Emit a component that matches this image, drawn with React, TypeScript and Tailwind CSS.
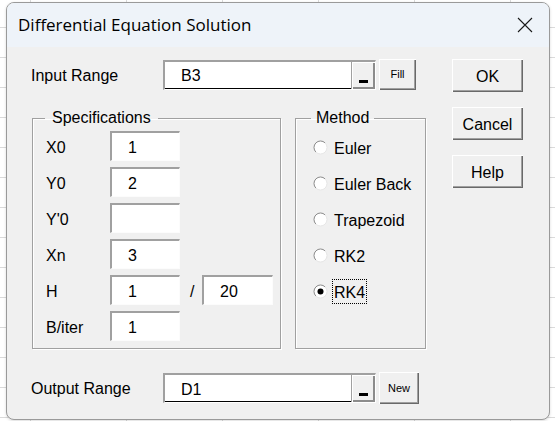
import React from 'react';

const sans = "font-['Liberation_Sans',Arial,sans-serif]";

function Box({ value, className }: { value: string; className: string }) {
  return (
    <div
      className={`flex h-[30px] items-center bg-white pl-[16px] pt-[3px] border-t-2 border-l-2 border-[#a0a0a0] border-b border-r border-b-[#fcfcfc] border-r-[#fcfcfc] ${className}`}
    >
      {value}
    </div>
  );
}

function RefEdit({ value }: { value: string }) {
  return (
    <div className="flex h-[30px] w-[213px] border-t-2 border-l-2 border-[#a0a0a0] border-b border-r border-b-white border-r-white">
      <div className="flex flex-1 items-center border-b border-black bg-white pl-[16px] pt-[3px]">{value}</div>
      <div className="flex w-[24px] items-end justify-center border-l border-[#a0a0a0] bg-[#f0f0f0] pb-[6px] shadow-[inset_1px_1px_0_#fff,inset_-2px_-2px_0_#8c8c8c]">
        <div className="h-[3px] w-[9px] bg-black" />
      </div>
    </div>
  );
}

function Btn({ label, className, small }: { label: string; className: string; small?: boolean }) {
  return (
    <button
      className={`flex items-center justify-center bg-[#f0f0f0] text-black shadow-[inset_1px_1px_0_#fff,inset_-1px_-1px_0_#696969,inset_-2px_-2px_0_#a0a0a0] ${small ? 'text-[11px]' : 'text-[16px] pt-[2px]'} ${className}`}
    >
      {label}
    </button>
  );
}

function Radio({ label, checked }: { label: string; checked?: boolean }) {
  return (
    <div className="flex h-[30px] items-center pt-[3px]">
      <svg width="15" height="15" viewBox="0 0 15 15" className="shrink-0">
        <circle cx="7.5" cy="7.5" r="6.5" fill="white" />
        <path d="M2.9 12.1 A6.5 6.5 0 0 1 12.1 2.9" stroke="#8a8a8a" strokeWidth="1" fill="none" />
        <path d="M12.1 2.9 A6.5 6.5 0 0 1 2.9 12.1" stroke="#e6e6e6" strokeWidth="1" fill="none" />
        {checked && <circle cx="7.5" cy="7.5" r="3" fill="black" />}
      </svg>
      <span
        className={`ml-[4px] flex h-[25px] items-center border px-[1px] pt-[2px] ${checked ? 'border-dotted border-black' : 'border-transparent'}`}
      >
        {label}
      </span>
    </div>
  );
}

const specRows: [string, string][] = [
  ['X0', '1'],
  ['Y0', '2'],
  ["Y'0", ''],
  ['Xn', '3'],
  ['H', '1'],
  ['B/iter', '1'],
];

export default function App() {
  return (
    <div className="h-[421px] w-[555px] overflow-hidden bg-white bg-[linear-gradient(to_right,#dadada_1px,transparent_1px),linear-gradient(to_bottom,#dadada_1px,transparent_1px)] [background-size:96px_30px] [background-position:30px_27px] pt-[2px] pl-[6px]">
      <div className="flex h-[418px] w-[544px] flex-col overflow-hidden rounded-[8px] border border-[#9a9a9a] bg-[#f0f0f0] shadow-[0_1px_3px_rgba(0,0,0,0.15)]">
        {/* title bar */}
        <div className="flex h-[44px] shrink-0 items-center justify-between bg-[#eef3f9] pl-[11px] pr-[16px] pb-[1px]">
          <span className="font-['Open_Sans','Noto_Sans',sans-serif] text-[17px] text-black">Differential Equation Solution</span>
          <svg width="16" height="16" viewBox="0 0 16 16">
            <path d="M1 1 L15 15 M15 1 L1 15" stroke="#1a1a1a" strokeWidth="1.1" />
          </svg>
        </div>

        {/* body */}
        <div className={`flex flex-1 pl-[24px] text-[16px] text-black ${sans}`}>
          <div className="flex w-[395px] flex-col">
            <div className="mt-[12px] flex items-center">
              <span className="w-[132px] pt-[2px]">Input Range</span>
              <RefEdit value="B3" />
              <Btn label="Fill" small className="ml-[3px] h-[31px] w-[37px]" />
            </div>

            <div className="mt-[19px] flex">
              <fieldset className="ml-[1px] w-[249px] border border-[#a0a0a0] shadow-[inset_1px_1px_0_#fff,1px_1px_0_#fff]">
                <legend className="ml-[12px] px-[7px] leading-[18px]">Specifications</legend>
                <div className="flex flex-col gap-[6px] pl-[13px] pt-[4px] pb-[7px]">
                  {specRows.map(([label, value]) => (
                    <div key={label} className="flex h-[30px] items-center">
                      <span className="w-[64px] pt-[3px]">{label}</span>
                      <Box value={value} className="w-[70px]" />
                      {label === 'H' && (
                        <>
                          <span className="ml-[10px] w-[12px] pt-[3px]">/</span>
                          <Box value="20" className="w-[71px]" />
                        </>
                      )}
                    </div>
                  ))}
                </div>
              </fieldset>

              <fieldset className="ml-[14px] w-[131px] border border-[#a0a0a0] shadow-[inset_1px_1px_0_#fff,1px_1px_0_#fff]">
                <legend className="ml-[15px] px-[5px] leading-[18px]">Method</legend>
                <div className="flex flex-col gap-[6px] pl-[17px] pt-[4px] pb-[7px]">
                  <Radio label="Euler" />
                  <Radio label="Euler Back" />
                  <Radio label="Trapezoid" />
                  <Radio label="RK2" />
                  <Radio label="RK4" checked />
                </div>
              </fieldset>
            </div>

            <div className="mt-[23px] flex items-center">
              <span className="w-[132px] pt-[2px]">Output Range</span>
              <RefEdit value="D1" />
              <Btn label="New" small className="ml-[3px] h-[32px] w-[40px]" />
            </div>
          </div>

          <div className="ml-[26px] mt-[12px] flex flex-col gap-[15px]">
            <Btn label="OK" className="h-[33px] w-[71px]" />
            <Btn label="Cancel" className="h-[33px] w-[71px]" />
            <Btn label="Help" className="h-[33px] w-[71px]" />
          </div>
        </div>
      </div>
    </div>
  );
}
